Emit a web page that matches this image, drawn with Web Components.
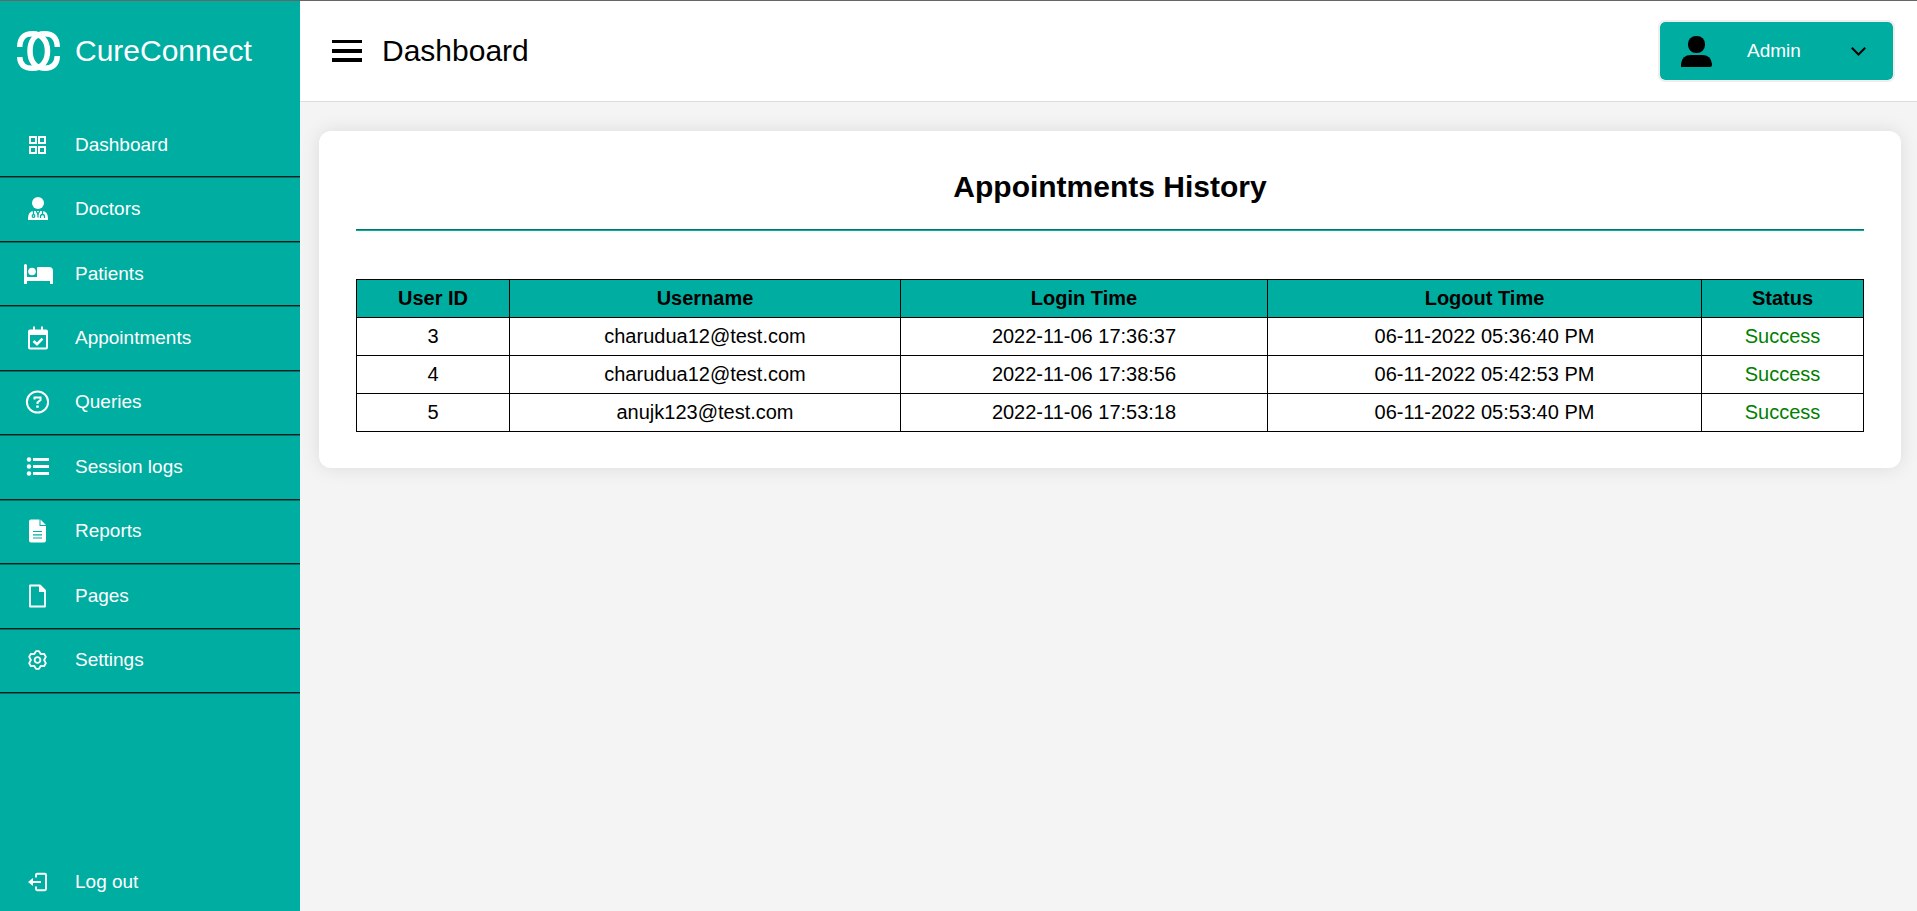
<!DOCTYPE html>
<html lang="en">
<head>
<meta charset="utf-8">
<meta name="viewport" content="width=device-width, initial-scale=1">
<title>CureConnect - Dashboard</title>
<style>
  body {
    margin: 0;
    font-family: "Liberation Sans", Arial, sans-serif;
    background: #f4f4f4;
    color: #000;
    --teal: #00ada1;
    --line: #04201e;
  }
</style>
</head>
<body>
<cc-app>
  <cc-sidebar slot="sidebar">
    <cc-nav-item icon="grid">Dashboard</cc-nav-item>
    <cc-nav-item icon="doctor">Doctors</cc-nav-item>
    <cc-nav-item icon="bed">Patients</cc-nav-item>
    <cc-nav-item icon="calendar">Appointments</cc-nav-item>
    <cc-nav-item icon="question">Queries</cc-nav-item>
    <cc-nav-item icon="list">Session logs</cc-nav-item>
    <cc-nav-item icon="report">Reports</cc-nav-item>
    <cc-nav-item icon="page">Pages</cc-nav-item>
    <cc-nav-item icon="gear">Settings</cc-nav-item>
    <cc-nav-item icon="logout" slot="footer">Log out</cc-nav-item>
  </cc-sidebar>
  <cc-topbar slot="topbar">Dashboard<cc-profile slot="profile">Admin</cc-profile></cc-topbar>
  <cc-card>
    <span slot="title">Appointments History</span>
    <cc-log-table></cc-log-table>
  </cc-card>
</cc-app>

<script>
const icons = {
  grid: '<g fill="none" stroke="currentColor" stroke-width="2"><rect x="7" y="4" width="6" height="6"/><rect x="16" y="4" width="6" height="6"/><rect x="7" y="14" width="6" height="6"/><rect x="16" y="14" width="6" height="6"/></g>',
  doctor: '<circle cx="15" cy="6" r="6"/><path d="M5 23V21.500Q5 14 11 14h8q6 0 6 7.500V23z"/><g fill="none" stroke="#00ada1" stroke-width="1.300"><path d="M13.200 14l1.800 3 1.800-3M10.500 14v3.500M19.500 14v3"/><circle cx="10.500" cy="19" r="1.300"/><path d="M17.500 21v-1.500a2 2 0 0 1 4 0V21M15 17v3.500"/></g>',
  bed: '<path d="M1 3q1.500-2 3 0v12h10V6q0-1 1-1h11q4 0 4 4V22h-3v-3H4v3H1z"/><circle cx="9" cy="9.500" r="3.800"/>',
  calendar: '<path fill-rule="evenodd" d="M10 .5h2v3h6v-3h2v3h3q2 0 2 2V21.500q0 2-2 2H7q-2 0-2-2V5.500q0-2 2-2h3zM7 9v12.500h16V9z"/><path d="M10.500 15l3.500 3.200 5.500-5.500" fill="none" stroke="currentColor" stroke-width="2.600"/>',
  question: '<g fill="none" stroke="currentColor" stroke-width="2"><circle cx="14.500" cy="12" r="10.600"/><path d="M11.500 9.500V7.500h6v2.500l-3 2.500v1.500"/></g><rect x="13.200" y="15.500" width="2.600" height="2.200"/>',
  list: '<path d="M10 3h16v3H10zM10 10h16v3H10zM10 17h16v3H10z"/><circle cx="6" cy="4.500" r="2.200"/><circle cx="6" cy="11.500" r="2.200"/><circle cx="6" cy="18.500" r="2.200"/>',
  report: '<path d="M6 2.500Q6 .5 8 .5h8.500V7H23v14.500q0 2-2 2H8q-2 0-2-2zM17.500.5L23 6h-5.500z"/><path d="M10 12.500h9M10 15.800h9M10 19h9" stroke="#00ada1" stroke-width="1.200"/>',
  page: '<path d="M7 1.500h10l5 5v16H7z" fill="none" stroke="currentColor" stroke-width="1.800" stroke-linejoin="round"/><path d="M16 1l7 7h-7z"/>',
  gear: '<g transform="translate(14.500 12)" fill="none" stroke="currentColor" stroke-width="1.800" stroke-linejoin="round"><path d="M-1.500-8.800H1.500L3.200-6 6.600-6.200 8.300-3.200 6.600 0 8.300 3.200 6.600 6.200 3.200 6 1.500 8.800H-1.500L-3.200 6-6.600 6.200-8.300 3.200-6.600 0-8.300-3.200-6.600-6.200-3.200-6z"/><circle r="2.900"/></g>',
  logout: '<path d="M13 7.500V5q0-1.200 1.200-1.200h7.600Q23 3.800 23 5v14q0 1.200-1.200 1.200h-7.600Q13 20.200 13 19v-2.500M8 12h10" fill="none" stroke="currentColor" stroke-width="1.900"/><path d="M5 12l5-4v8z"/>'
};

function define(name, html, setup) {
  const template = document.createElement('template');
  template.innerHTML = html;
  customElements.define(name, class extends HTMLElement {
    constructor() {
      super();
      this.attachShadow({ mode: 'open' }).append(template.content.cloneNode(true));
    }
    connectedCallback() {
      if (setup) setup(this, this.shadowRoot);
    }
  });
}

define('cc-app', `
  <style>
    :host { display: grid; grid-template-columns: 300px 1fr; min-height: 100vh; box-sizing: border-box; border-top: 1px solid #666; }
    .page { display: flex; flex-direction: column; min-width: 0; }
    main { padding: 29px 16px 29px 19px; }
  </style>
  <slot name="sidebar"></slot>
  <div class="page">
    <slot name="topbar"></slot>
    <main><slot></slot></main>
  </div>`);

define('cc-sidebar', `
  <style>
    :host { display: flex; flex-direction: column; background: var(--teal); color: #fff; }
    .brand { display: flex; align-items: center; gap: 14px; height: 100px; padding-left: 15px; font-size: 30px; color: inherit; text-decoration: none; }
    .brand svg { width: 46px; height: 42px; }
    nav { display: grid; grid-auto-rows: 1fr; height: 580px; margin-top: 12px; }
    footer { margin-top: auto; height: 58px; display: grid; --line: transparent; --glow: transparent; }
  </style>
  <a class="brand" href="#">
    <svg viewBox="15 30 46 42" fill="none" stroke="#fff" stroke-width="5.500" aria-hidden="true">
      <path d="M57.300 47C57 38 53 33.800 44.500 33.800C35 33.800 30 41 30 51C30 61 35 68.300 44.500 68.300C53 68.300 57 64 57.300 56"/>
      <path d="M19.700 47C20 38 24 33.800 32.500 33.800C42 33.800 47.500 41 47.500 51C47.500 61 42 68.300 32.500 68.300C24 68.300 20 64 19.700 57"/>
    </svg>
    <span>CureConnect</span>
  </a>
  <nav><slot></slot></nav>
  <footer><slot name="footer"></slot></footer>`);

define('cc-nav-item', `
  <style>
    :host { display: grid; border-bottom: 1px solid var(--line); box-shadow: 0 1px 0 var(--glow, #0b6b65); }
    a { display: flex; align-items: center; gap: 22px; padding-left: 23px; font-size: 19px; color: inherit; text-decoration: none; }
    svg { width: 30px; height: 24px; fill: currentColor; }
  </style>
  <a href="#"><svg viewBox="0 0 30 24" aria-hidden="true"></svg><span><slot></slot></span></a>`,
  (host, root) => { root.querySelector('svg').innerHTML = icons[host.getAttribute('icon')]; });

define('cc-topbar', `
  <style>
    :host { display: flex; align-items: center; height: 100px; padding: 0 22px 0 32px; background: #fff; border-bottom: 1px solid #dcdcdc; }
    .toggle { display: flex; padding: 0; border: 0; background: none; color: #000; cursor: pointer; }
    h1 { flex: 1; margin: 0 0 0 20px; font-size: 30px; font-weight: 400; }
  </style>
  <button class="toggle" type="button" aria-label="Toggle menu">
    <svg width="30" height="24" viewBox="0 0 30 24"><path d="M0 1h30v3H0zM0 10h30v4H0zM0 19h30v4H0z"/></svg>
  </button>
  <h1><slot></slot></h1>
  <slot name="profile"></slot>`);

define('cc-profile', `
  <style>
    :host { display: block; }
    button { display: flex; align-items: center; gap: 35px; box-sizing: border-box; width: 237px; height: 62px; padding: 0 27px 0 21px; border: 2px solid #eee; border-radius: 7px; background: var(--teal); background-clip: padding-box; font: 19px "Liberation Sans", Arial, sans-serif; color: #fff; cursor: pointer; }
    .arrow { margin-left: auto; }
  </style>
  <button type="button" aria-haspopup="true">
    <svg width="31" height="31" viewBox="0 0 31 31" fill="#000" aria-hidden="true"><rect x="7" width="17" height="17" rx="8"/><path d="M0 31v-3Q1 19 10 19h11q9 0 10 9v1q0 2-2 2z"/></svg>
    <span><slot></slot></span>
    <svg class="arrow" width="15" height="9" viewBox="0 0 15 9" fill="none" stroke="#000" stroke-width="2" aria-hidden="true"><path d="M.8.8l6.700 6.700L14.200.8"/></svg>
  </button>`);

define('cc-card', `
  <style>
    :host { display: block; padding: 37px 37px 36px; background: #fff; border-radius: 12px; box-shadow: 0 0 19px rgba(0, 0, 0, .1); }
    h2 { margin: 0; font-size: 30px; line-height: 38px; text-align: center; padding-bottom: 23px; }
    hr { height: 1px; margin: 0 0 48px; border: 0; border-top: 1px solid #04746c; background: var(--teal); }
  </style>
  <h2><slot name="title"></slot></h2>
  <hr>
  <slot></slot>`);

define('cc-log-table', `
  <style>
    :host { display: block; }
    table { width: 100%; border-collapse: collapse; table-layout: fixed; font-size: 20px; line-height: 23px; text-align: center; }
    th, td { padding: 7px; border: 1px solid #000; }
    th { background: var(--teal); }
    .ok { color: green; }
    .c1 { width: 153px } .c2 { width: 391px } .c3 { width: 367px } .c4 { width: 434px } .c5 { width: 162px }
  </style>
  <table>
    <colgroup><col class="c1"><col class="c2"><col class="c3"><col class="c4"><col class="c5"></colgroup>
    <thead>
      <tr><th scope="col">User ID</th><th scope="col">Username</th><th scope="col">Login Time</th><th scope="col">Logout Time</th><th scope="col">Status</th></tr>
    </thead>
    <tbody>
      <tr><td>3</td><td>charudua12@test.com</td><td>2022-11-06 17:36:37</td><td>06-11-2022 05:36:40 PM</td><td class="ok">Success</td></tr>
      <tr><td>4</td><td>charudua12@test.com</td><td>2022-11-06 17:38:56</td><td>06-11-2022 05:42:53 PM</td><td class="ok">Success</td></tr>
      <tr><td>5</td><td>anujk123@test.com</td><td>2022-11-06 17:53:18</td><td>06-11-2022 05:53:40 PM</td><td class="ok">Success</td></tr>
    </tbody>
  </table>`);
</script>
</body>
</html>
